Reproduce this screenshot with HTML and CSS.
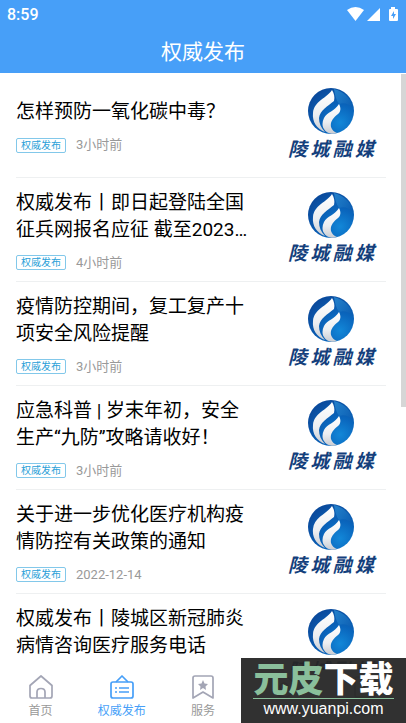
FILE: index.html
```
<!DOCTYPE html>
<html lang="zh-CN">

<head>
    <meta charset="UTF-8">
    <meta name="viewport" content="width=device-width, initial-scale=1.0">
    <title>权威发布</title>
    <link rel="stylesheet" href="styles.css">
</head>

<body>
    <!-- shared logo drawing -->
    <svg class="defs" width="0" height="0" aria-hidden="true">
        <defs>
            <radialGradient id="globe" cx="0.7" cy="0.75" r="0.8">
                <stop offset="0" stop-color="#1287d8" />
                <stop offset="0.45" stop-color="#0a66bd" />
                <stop offset="1" stop-color="#0a4a9c" />
            </radialGradient>
            <linearGradient id="flame" x1="0" y1="0" x2="0" y2="1">
                <stop offset="0" stop-color="#ffffff" />
                <stop offset="0.6" stop-color="#eceef1" />
                <stop offset="1" stop-color="#c9ccd2" />
            </linearGradient>
            <linearGradient id="shine" x1="0" y1="0" x2="1" y2="1">
                <stop offset="0" stop-color="#2f97dd" />
                <stop offset="1" stop-color="#0b59ad" />
            </linearGradient>
            <symbol id="logo" viewBox="0 0 46 46">
                <circle cx="23" cy="23" r="23" fill="url(#globe)" />
                <path d="M26 1C35 3 43 10 45 20C41 16 36 14 31 16C28 12 27 7 26 1Z" fill="url(#shine)" opacity="0.7" />
                <path d="M24 2C26 5 27 9 26 13C20 18 12 22 11 30C11 35 13 40 17 44C9 41 4 34 5 25C6 13 19 10 24 2Z" fill="url(#flame)" />
                <path d="M31 16C33 20 33 23 30 26C25 30 22 34 23 39C24 42 26 44 29 45C24 47 18 45 16 41C14 38 14 34 16 30C19 24 27 23 31 16Z" fill="url(#flame)" />
            </symbol>
        </defs>
    </svg>

    <header class="top">
        <div class="status">
            <span>8:59</span>
            <svg width="52" height="16" viewBox="0 0 52 16" fill="#fff" aria-hidden="true">
                <path d="M0 4Q8.500-2 17 4L8.500 15Z" />
                <path d="M33 2V15H20Z" />
                <path d="M44 1H48V3H50Q51 3 51 4V14Q51 15 50 15H43Q42 15 42 14V4Q42 3 43 3H44Z" />
                <path d="M47 5L44 10H46V13L49 8H47Z" fill="#479ff8" />
            </svg>
        </div>
        <h1>权威发布</h1>
    </header>

    <main class="news">
        <article class="item">
            <div class="text">
                <h2>怎样预防一氧化碳中毒？</h2>
                <p class="meta"><span class="tag">权威发布</span><time>3小时前</time></p>
            </div>
            <div class="brand">
                <svg width="46" height="46"><use href="#logo" /></svg>
                <div class="name"><span>陵</span><span>城</span><span>融</span><span>媒</span></div>
            </div>
        </article>
        <article class="item">
            <div class="text">
                <h2>权威发布丨即日起登陆全国征兵网报名应征 截至2023…</h2>
                <p class="meta"><span class="tag">权威发布</span><time>4小时前</time></p>
            </div>
            <div class="brand">
                <svg width="46" height="46"><use href="#logo" /></svg>
                <div class="name"><span>陵</span><span>城</span><span>融</span><span>媒</span></div>
            </div>
        </article>
        <article class="item">
            <div class="text">
                <h2>疫情防控期间，复工复产十项安全风险提醒</h2>
                <p class="meta"><span class="tag">权威发布</span><time>3小时前</time></p>
            </div>
            <div class="brand">
                <svg width="46" height="46"><use href="#logo" /></svg>
                <div class="name"><span>陵</span><span>城</span><span>融</span><span>媒</span></div>
            </div>
        </article>
        <article class="item">
            <div class="text">
                <h2>应急科普 | 岁末年初，安全生产“九防”攻略请收好！</h2>
                <p class="meta"><span class="tag">权威发布</span><time>3小时前</time></p>
            </div>
            <div class="brand">
                <svg width="46" height="46"><use href="#logo" /></svg>
                <div class="name"><span>陵</span><span>城</span><span>融</span><span>媒</span></div>
            </div>
        </article>
        <article class="item">
            <div class="text">
                <h2>关于进一步优化医疗机构疫情防控有关政策的通知</h2>
                <p class="meta"><span class="tag">权威发布</span><time>2022-12-14</time></p>
            </div>
            <div class="brand">
                <svg width="46" height="46"><use href="#logo" /></svg>
                <div class="name"><span>陵</span><span>城</span><span>融</span><span>媒</span></div>
            </div>
        </article>
        <article class="item last">
            <div class="text">
                <h2>权威发布丨陵城区新冠肺炎病情咨询医疗服务电话</h2>
            </div>
            <div class="brand">
                <svg width="46" height="46"><use href="#logo" /></svg>
                <div class="name"><span>陵</span><span>城</span><span>融</span><span>媒</span></div>
            </div>
        </article>
    </main>
    <div class="scrollbar"></div>

    <nav class="tabs">
        <a href="#">
            <svg width="24" height="24" viewBox="0 0 24 24"><path d="M1 10.500L12 1L23 10.500V21Q23 23 21 23H3Q1 23 1 21Z" /><path d="M8 23V17Q8 13.500 12 13.500T16 17V23" /></svg>
            首页
        </a>
        <a href="#" class="active">
            <svg width="24" height="24" viewBox="0 0 24 24"><path d="M6 7L12 1L18 7" /><rect x="1" y="7" width="22" height="16" rx="2" /><path d="M5 13H7M9 13H19M5 17H7M9 17H19" /></svg>
            权威发布
        </a>
        <a href="#">
            <svg width="24" height="24" viewBox="0 0 24 24"><path d="M2 3Q2 1 4 1H20Q22 1 22 3V23L12 17L2 23Z" /><path class="solid" d="M12 5L13.500 8.500L17 9L14.500 11.500L15 15L12 13L9 15L9.500 11.500L7 9L10.500 8.500Z" /></svg>
            服务
        </a>
        <a href="#">
            <svg width="24" height="24" viewBox="0 0 24 24"><circle cx="12" cy="12" r="10" /><circle cx="12" cy="12" r="4" /></svg>
            关注
        </a>
        <a href="#">
            <svg width="24" height="24" viewBox="0 0 24 24"><rect x="2" y="2" width="20" height="20" rx="2" /><path d="M8 14Q12 18 16 14" /></svg>
            我的
        </a>
    </nav>

    <div class="watermark">
        <strong><em>元皮</em>下载</strong>
        <span>www.yuanpi.com</span>
    </div>
</body>

</html>
```
FILE: styles.css
```
* {
    box-sizing: border-box;
}

body {
    margin: 0;
    height: 100vh;
    display: flex;
    flex-direction: column;
    overflow: hidden;
    background-color: #fff;
    color: #000;
    font-family: Roboto, "Noto Sans CJK SC", sans-serif;
}

.defs {
    position: absolute;
}

.top {
    flex: none;
    background-color: #479ff8;
    color: #fff;
}

.status {
    height: 28px;
    padding: 0 7px;
    display: flex;
    align-items: center;
    justify-content: space-between;
    font-size: 16px;
    font-weight: 500;
}

h1 {
    margin: 0;
    height: 45px;
    padding-top: 8px;
    line-height: 32px;
    text-align: center;
    font-size: 21px;
    font-weight: 400;
}

/* news list */
.news {
    flex: 1;
    min-height: 0;
    overflow: hidden;
    padding: 1px 20px 0 16px;
}

.item {
    height: 104px;
    display: flex;
    align-items: center;
    justify-content: space-between;
    border-bottom: 1px solid #eef0f1;
}

.item.last {
    border-bottom: none;
}

.last .text {
    padding-bottom: 28px;
}

.text {
    width: 240px;
}

h2 {
    margin: 0;
    font-size: 19px;
    line-height: 27px;
    font-weight: 400;
}

.meta {
    margin: 0;
    padding-top: 12px;
    display: flex;
    align-items: center;
    gap: 10px;
    font-size: 13px;
    line-height: 16px;
    color: #999;
}

.tag {
    padding: 0 4px;
    border: 1px solid #82c8ea;
    border-radius: 2px;
    color: #2a9fd8;
    font-size: 10px;
    line-height: 13px;
}

.brand {
    margin-right: 12px;
    padding-bottom: 4px;
    display: flex;
    flex-direction: column;
    align-items: center;
    gap: 3px;
}

.name {
    width: 86px;
    display: flex;
    justify-content: space-between;
    color: #143f7c;
    font-family: "Noto Sans CJK SC", sans-serif;
    font-size: 19px;
    font-style: italic;
    font-weight: 700;
    line-height: 22px;
}

.scrollbar {
    position: absolute;
    top: 74px;
    right: 0;
    width: 5px;
    height: 46vh;
    background-color: #d6d6d6;
}

/* bottom tabs */
.tabs {
    flex: none;
    height: 53px;
    display: flex;
    background-color: #fff;
}

.tabs a {
    flex: 1;
    padding-top: 5px;
    display: flex;
    flex-direction: column;
    align-items: center;
    gap: 3px;
    color: #999;
    font-size: 12px;
    line-height: 18px;
    text-decoration: none;
}

.tabs svg {
    fill: none;
    stroke: #a3a5b5;
    stroke-width: 1.7;
    stroke-linejoin: round;
}

.tabs .solid {
    fill: #a3a5b5;
    stroke: none;
}

.tabs .active {
    color: #479ff8;
}

.tabs .active svg {
    stroke: #479ff8;
}

.watermark {
    position: absolute;
    right: 0;
    bottom: 0;
    width: 165px;
    height: 65px;
    padding: 6px 12px 0;
    background-color: rgba(38, 38, 38, 0.95);
    color: #fff;
    text-align: center;
}

.watermark strong {
    display: block;
    border-bottom: 1px solid #8abf9b;
    font-size: 35px;
    font-weight: 900;
    line-height: 34px;
}

.watermark em {
    color: #8abf9b;
    font-style: normal;
}

.watermark span {
    display: block;
    font-family: "Liberation Sans", sans-serif;
    font-size: 16px;
    line-height: 20px;
}
```
